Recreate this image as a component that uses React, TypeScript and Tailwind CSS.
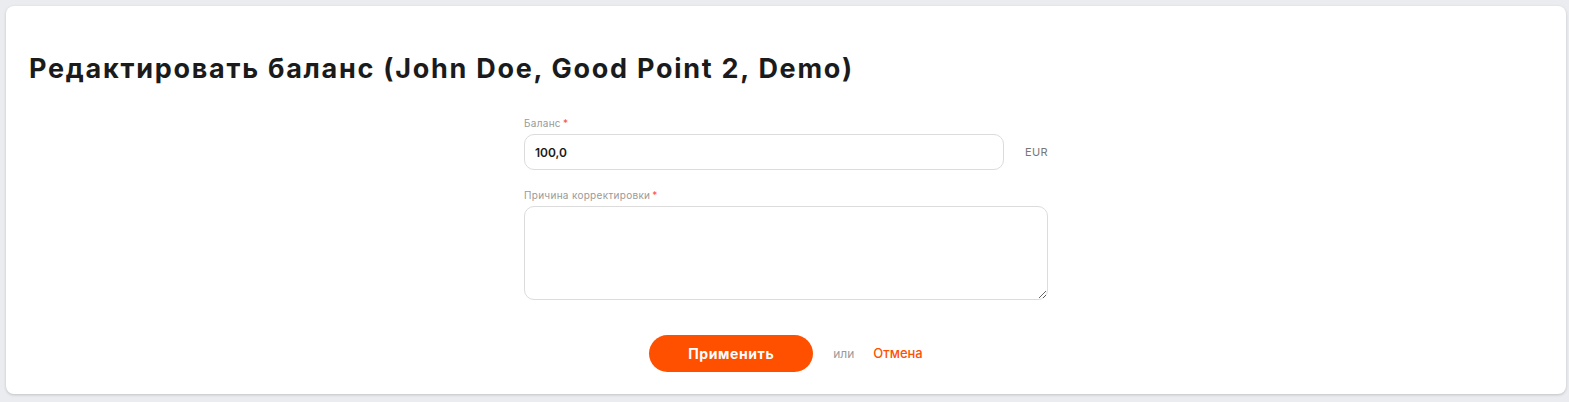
export default function App() {
  const font = { fontFamily: 'Inter, "Noto Sans", sans-serif' };
  return (
    <div className="w-[1569px] h-[402px] bg-[#ebecf0] pt-[6px] pl-[6px]" style={font}>
      <div className="w-[1560px] h-[388px] bg-white rounded-[8px] shadow-[0_1px_3px_rgba(0,0,0,0.18)] flex flex-col">
        <h1 className="ml-[23px] mt-[47px] text-[27px] leading-[32px] font-bold text-[#1b1b1b] tracking-[1.73px]">
          Редактировать баланс (John Doe, Good Point 2, Demo)
        </h1>
        <div className="mt-[31px] flex flex-col items-center">
          <div className="w-[524px]">
            <div className="text-[10px] leading-[14px] text-[#9a9a9a] tracking-[0.3px]">
              Баланс<span className="text-[#ff4d4f] ml-[2px]">*</span>
            </div>
            <div className="mt-[4px] flex items-center">
              <input
                defaultValue="100,0"
                className="w-[480px] h-[36px] rounded-[10px] border border-[#dcdcdc] px-[10px] text-[12px] font-semibold text-[#1b1b1b] outline-none"
              />
              <span className="ml-[21px] text-[11px] text-[#777] tracking-[0.3px]">EUR</span>
            </div>
            <div className="mt-[18px] text-[10px] leading-[14px] text-[#9a9a9a] tracking-[0.3px]">
              Причина корректировки<span className="text-[#ff4d4f] ml-[2px]">*</span>
            </div>
            <textarea className="mt-[4px] block w-[524px] h-[94px] rounded-[10px] border border-[#dcdcdc] outline-none px-[10px] py-[8px] text-[12px]" />
          </div>
          <div className="mt-[35px] flex items-center">
            <button className="w-[164px] h-[37px] rounded-full bg-[#ff5000] text-white text-[14px] font-bold tracking-[0.6px]">
              Применить
            </button>
            <span className="ml-[20px] text-[12px] text-[#9a9a9a]">или</span>
            <span className="ml-[19px] text-[13px] font-medium text-[#ff5000]">Отмена</span>
          </div>
        </div>
      </div>
    </div>
  );
}
